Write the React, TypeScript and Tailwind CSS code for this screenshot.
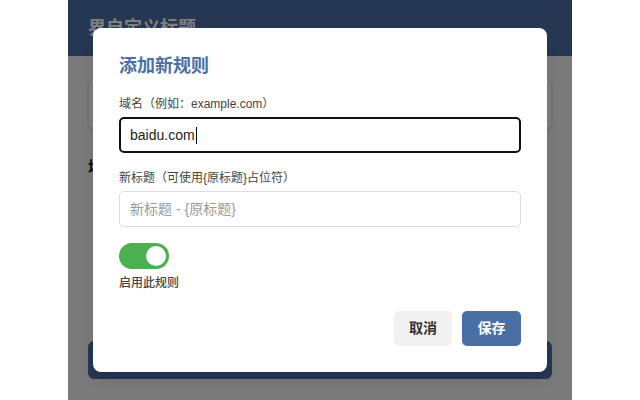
import React from "react";

const FONT = { fontFamily: '"Liberation Sans", "Noto Sans CJK SC", sans-serif' };

export default function App() {
  return (
    <div className="w-full h-[400px] bg-white flex justify-center overflow-hidden" style={FONT}>
      <div className="relative w-[504px] h-[400px] bg-[#f5f5f5] overflow-hidden">
        {/* underlying page */}
        <div className="h-[56px] bg-[#4a6fa5] flex items-center px-5">
          <span className="text-white text-[18px] leading-[26px] font-semibold">界自定义标题</span>
        </div>
        <div className="px-5 pt-[22px] flex flex-col">
          <div className="h-[53px] bg-white rounded-lg border border-[#e4e4e4] shadow-sm"></div>
          <div className="mt-[26px] text-[16px] leading-[22px] font-bold text-[#222]">域</div>
          <div className="mt-[162px] h-[38px] rounded-md bg-[#4a6fa5]"></div>
        </div>

        {/* overlay */}
        <div className="absolute inset-0 bg-black/50 flex items-center justify-center">
          <div className="w-[454px] bg-white rounded-lg shadow-lg px-[26px] pt-[25px] pb-[26px] flex flex-col">
            <div className="text-[18px] leading-[27px] font-bold text-[#4a6fa5]">添加新规则</div>

            <div className="mt-[15px] flex flex-col">
              <label className="text-[12px] leading-[18px] text-[#444]">域名（例如：example.com）</label>
              <div className="mt-1 h-[36px] rounded-[5px] border-2 border-[#111] flex items-center pl-[9px]">
                <span className="text-[14px] leading-[20px] text-[#222]">baidu.com</span>
                <span className="w-px h-[17px] bg-black ml-[1px]"></span>
              </div>
            </div>

            <div className="mt-4 flex flex-col">
              <label className="text-[12px] leading-[18px] text-[#444]">新标题（可使用{"{"}原标题{"}"}占位符）</label>
              <div className="mt-1 h-[36px] rounded-[5px] border border-[#dddddd] flex items-center pl-[10px]">
                <span className="text-[14px] leading-[20px] text-[#9a9a9a]">新标题 - {"{"}原标题{"}"}</span>
              </div>
            </div>

            <div className="mt-4 flex flex-col items-start">
              <div className="w-[50px] h-[26px] rounded-full bg-[#4caf50] relative">
                <div className="absolute top-[3px] left-[27px] w-[20px] h-[20px] rounded-full bg-white"></div>
              </div>
              <div className="mt-[5px] text-[12px] leading-[18px] font-medium text-[#444]">启用此规则</div>
            </div>

            <div className="mt-[19px] flex justify-end gap-[10px]">
              <button className="w-[58px] h-[35px] rounded-[5px] bg-[#f1f1f1] text-[#333] text-[14px] font-semibold">取消</button>
              <button className="w-[59px] h-[35px] rounded-[5px] bg-[#4a6fa5] text-white text-[14px] font-semibold">保存</button>
            </div>
          </div>
        </div>
      </div>
    </div>
  );
}
